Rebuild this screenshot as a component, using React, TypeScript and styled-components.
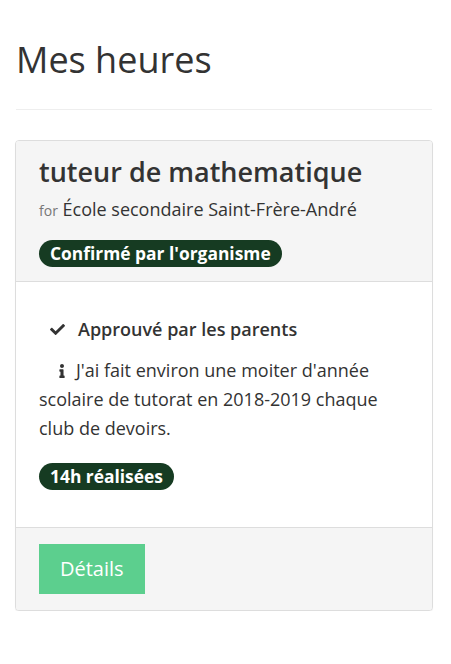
import React from "react";
import styled, { createGlobalStyle } from "styled-components";
import { FaCheck, FaInfo } from "react-icons/fa";

const Global = createGlobalStyle`
  html, body { margin: 0; padding: 0; background: #fff; }
  body { font-family: "Open Sans", "Liberation Sans", sans-serif; color: #333; }
  * { box-sizing: border-box; }
`;

const Page = styled.div`
  padding: 0 18px 0 15px;
`;

const Title = styled.h1`
  margin: 0;
  padding-top: 36px;
  padding-left: 1px;
  font-size: 36px;
  font-weight: 400;
  line-height: 48px;
  color: #333;
`;

const Rule = styled.hr`
  margin: 25px 1px 30px;
  border: 0;
  border-top: 1px solid #eee;
`;

const Card = styled.div`
  border: 1px solid #ddd;
  border-radius: 4px;
  background: #fff;
  box-shadow: 0 1px 1px rgba(0, 0, 0, 0.05);
  overflow: hidden;
`;

const Section = styled.div<{ $tone: "head" | "body" | "foot" }>`
  display: flex;
  flex-direction: column;
  align-items: flex-start;
  background: ${(p) => (p.$tone === "body" ? "#fff" : "#f5f5f5")};
  border-top: ${(p) => (p.$tone === "head" ? "0" : "1px solid #ddd")};
  padding: ${(p) =>
    p.$tone === "head" ? "13px 23px 14px" : p.$tone === "body" ? "33px 23px 37px" : "16px 23px 16px"};
`;

const CardTitle = styled.h3`
  margin: 0;
  font-size: 27px;
  font-weight: 600;
  line-height: 36px;
  color: #333;
`;

const Org = styled.div`
  margin-top: 6px;
  font-size: 18px;
  line-height: 26px;
  color: #333;
`;

const For = styled.small`
  font-size: 14px;
  color: #777;
`;

const Badge = styled.span<{ $gap: number }>`
  display: inline-block;
  margin-top: ${(p) => p.$gap}px;
  padding: 1px 11px 1px;
  border-radius: 14px;
  background: #163b22;
  color: #fff;
  font-size: 17.4px;
  font-weight: 700;
  line-height: 25px;
`;

const Line = styled.div<{ $strong?: boolean }>`
  font-size: 18px;
  line-height: 29px;
  font-weight: ${(p) => (p.$strong ? 600 : 400)};
  color: #333;
  margin-bottom: ${(p) => (p.$strong ? "12px" : "0")};
`;

const Icon = styled.span<{ $w: number; $ml: number }>`
  display: inline-block;
  width: ${(p) => p.$w}px;
  margin-left: ${(p) => p.$ml}px;
  vertical-align: -1px;
  svg { display: block; }
`;

const Button = styled.button`
  display: block;
  border: 0;
  border-radius: 0;
  background: #5ccf8e;
  color: #fff;
  font-family: inherit;
  font-size: 20px;
  line-height: 28px;
  padding: 11px 21px 11px;
  cursor: pointer;
`;

export default function App() {
  return (
    <>
      <Global />
      <Page>
        <Title>Mes heures</Title>
        <Rule />
        <Card>
          <Section $tone="head">
            <CardTitle>tuteur de mathematique</CardTitle>
            <Org>
              <For>for</For> École secondaire Saint-Frère-André
            </Org>
            <Badge $gap={16}>Confirmé par l'organisme</Badge>
          </Section>
          <Section $tone="body">
            <Line $strong>
              <Icon $w={28} $ml={11}>
                <FaCheck size={15} />
              </Icon>
              Approuvé par les parents
            </Line>
            <Line>
              <Icon $w={21} $ml={16}>
                <FaInfo size={14} />
              </Icon>
              J'ai fait environ une moiter d'année scolaire de tutorat en 2018-2019 chaque club de devoirs.
            </Line>
            <Badge $gap={20}>14h réalisées</Badge>
          </Section>
          <Section $tone="foot">
            <Button>Détails</Button>
          </Section>
        </Card>
      </Page>
    </>
  );
}
